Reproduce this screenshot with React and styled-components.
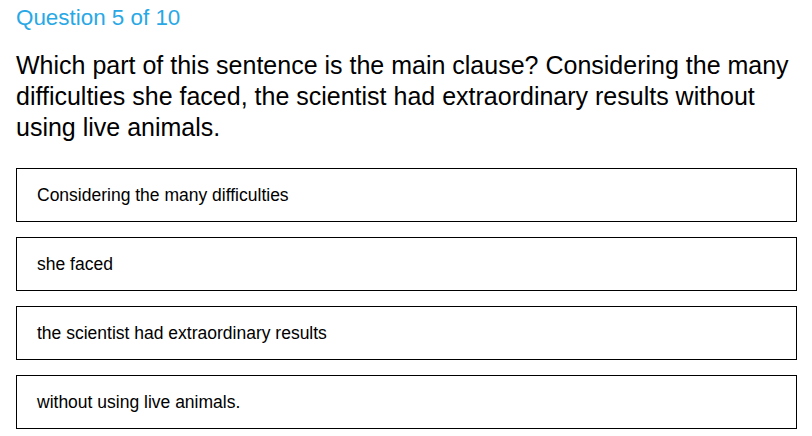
import React from 'react'
import styled, { createGlobalStyle } from 'styled-components'

const GlobalStyle = createGlobalStyle`
  body {
    margin: 0;
    background: #ffffff;
    font-family: 'Liberation Sans', Arial, sans-serif;
    color: #000;
  }
`

const options = [
  'Considering the many difficulties',
  'she faced',
  'the scientist had extraordinary results',
  'without using live animals.',
]

function App() {
  return (
    <Page>
      <GlobalStyle />
      <Counter>Question 5 of 10</Counter>
      <Prompt>
        Which part of this sentence is the main clause? Considering the many
        difficulties she faced, the scientist had extraordinary results without
        using live animals.
      </Prompt>
      <Options>
        {options.map((o) => (
          <Option key={o}>{o}</Option>
        ))}
      </Options>
    </Page>
  )
}

export default App

const Page = styled.div`
  padding: 5px 15px 0 16px;
  width: 781px;
`

const Counter = styled.div`
  font-size: 22.4px;
  line-height: 26px;
  color: #29a8e6;
`

const Prompt = styled.p`
  margin: 19px 0 0;
  font-size: 25px;
  line-height: 31px;
`

const Options = styled.div`
  display: flex;
  flex-direction: column;
  gap: 15px;
  margin-top: 25px;
`

const Option = styled.div`
  box-sizing: border-box;
  height: 54px;
  border: 1px solid #000;
  display: flex;
  align-items: center;
  padding: 0 20px;
  font-size: 17.5px;
`
